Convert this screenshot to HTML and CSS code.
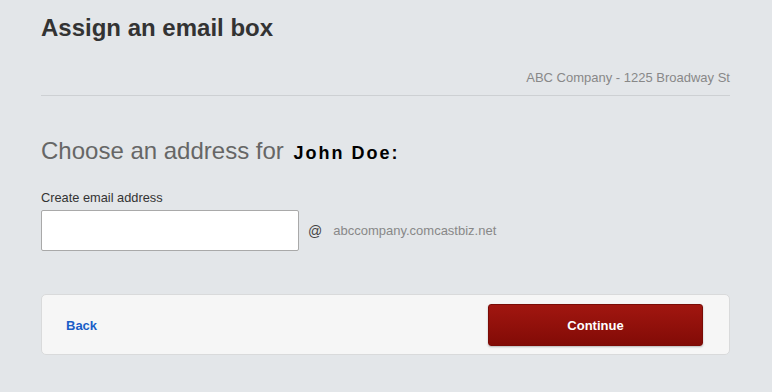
FILE: index.html
```html
<!DOCTYPE html>
<html lang="en">
<head>
<meta charset="utf-8">
<title>Assign an email box</title>
<link rel="stylesheet" href="styles.css">
</head>
<body>
<main class="page">
  <header class="page-header">
    <h1 class="title">Assign an email box</h1>
    <p class="company">ABC Company - 1225 Broadway St</p>
  </header>

  <section class="choose">
    <h2 class="choose-title">Choose an address for <span class="person">John Doe:</span></h2>
    <label class="field-label" for="email">Create email address</label>
    <div class="field-row">
      <input class="email-input" id="email" type="text">
      <span class="at">@</span>
      <span class="domain">abccompany.comcastbiz.net</span>
    </div>
  </section>

  <footer class="actions">
    <a class="back" href="#">Back</a>
    <button class="continue" type="button">Continue</button>
  </footer>
</main>
</body>
</html>
```

FILE: styles.css
```css
html, body {
  margin: 0;
  padding: 0;
  background: #e3e6e9;
}

body {
  font-family: "Liberation Sans", Arial, sans-serif;
  color: #333;
}

.page {
  padding: 0 42px 0 41px;
}

.page-header {
  border-bottom: 1px solid #cdd0d3;
  padding-bottom: 9px;
}

.title {
  margin: 0;
  padding-top: 14px;
  font-size: 24px;
  line-height: 28px;
  font-weight: bold;
  color: #333;
}

.company {
  margin: 28px 0 0;
  text-align: right;
  font-size: 13px;
  line-height: 16px;
  color: #888;
}

.choose {
  padding-top: 41px;
}

.choose-title {
  margin: 0;
  font-size: 24px;
  line-height: 28px;
  font-weight: normal;
  color: #666;
}

.person {
  font-size: 18px;
  font-weight: bold;
  color: #000;
  letter-spacing: 2px;
  margin-left: 3px;
}

.field-label {
  display: block;
  margin-top: 23px;
  font-size: 12.8px;
  line-height: 16px;
  color: #333;
}

.field-row {
  display: flex;
  align-items: center;
  margin-top: 4px;
}

.email-input {
  box-sizing: border-box;
  width: 258px;
  height: 41px;
  margin: 0;
  border: 1px solid #a9a9a9;
  border-radius: 2px;
  background: #fff;
  font-family: inherit;
  font-size: 14px;
  padding: 0 8px;
}

.at {
  margin-left: 9px;
  font-size: 14px;
  color: #444;
}

.domain {
  margin-left: 11px;
  font-size: 13px;
  color: #888;
}

.actions {
  display: flex;
  align-items: center;
  justify-content: space-between;
  margin-top: 43px;
  padding: 9px 26px 8px 24px;
  background: #f6f6f6;
  border: 1px solid #d9dadb;
  border-radius: 5px;
}

.back {
  font-size: 13px;
  font-weight: bold;
  color: #1a5ec8;
  text-decoration: none;
}

.continue {
  width: 215px;
  height: 42px;
  border: 1px solid #7a0b06;
  border-radius: 3px;
  background: linear-gradient(#a11610, #820b06);
  box-shadow: 0 1px 2px rgba(0, 0, 0, 0.25);
  color: #fff;
  font-family: inherit;
  font-size: 13px;
  font-weight: bold;
  padding: 0;
}
```
